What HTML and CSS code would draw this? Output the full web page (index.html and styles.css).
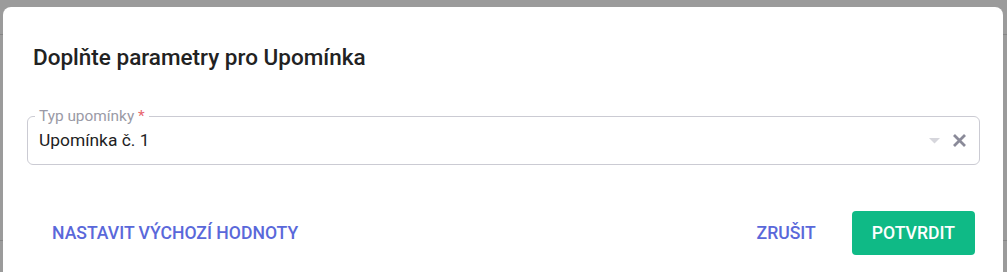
FILE: index.html
```html
<!DOCTYPE html>
<html lang="cs">
<head>
<meta charset="utf-8">
<title>Upomínka</title>
<link rel="stylesheet" href="styles.css">
</head>
<body>
<div class="backdrop">
  <div class="dialog">
    <h2 class="dialog-title">Doplňte parametry pro Upomínka</h2>
    <div class="dialog-content">
      <fieldset class="field">
        <legend class="field-label">Typ upomínky <span class="req">*</span></legend>
        <div class="field-row">
          <span class="field-value">Upomínka č. 1</span>
          <span class="field-icons">
            <svg class="caret" width="11" height="6" viewBox="0 0 11 6"><path d="M0 0h11L5.5 5.5z" fill="#d6d6dc"/></svg>
            <svg class="clear" width="15" height="15" viewBox="0 0 15 15"><path d="M2 2l11 11M13 2L2 13" stroke="#8a8a99" stroke-width="2.8" stroke-linecap="butt"/></svg>
          </span>
        </div>
      </fieldset>
    </div>
    <div class="dialog-actions">
      <button class="btn btn-text">NASTAVIT VÝCHOZÍ HODNOTY</button>
      <div class="actions-right">
        <button class="btn btn-text">ZRUŠIT</button>
        <button class="btn btn-primary">POTVRDIT</button>
      </div>
    </div>
  </div>
</div>
</body>
</html>
```
FILE: styles.css
```css
html, body {
  margin: 0;
  padding: 0;
  height: 100%;
  overflow: hidden;
}
body {
  font-family: Roboto, "Liberation Sans", sans-serif;
  background:
    linear-gradient(#868686, #868686) 0 34px / 100% 1px no-repeat,
    linear-gradient(#868686, #868686) 0 240px / 100% 1px no-repeat,
    #9b9b9b;
}
.backdrop {
  padding: 7px 0 0 3px;
  height: 100%;
  box-sizing: border-box;
}
.dialog {
  width: 1000px;
  height: 300px;
  background: #fff;
  border-radius: 8px 8px 0 0;
  box-sizing: border-box;
}
.dialog-title {
  margin: 0;
  padding: 35px 24px 0 30px;
  font-size: 22.5px;
  line-height: 30px;
  font-weight: 500;
  color: #222;
}
.dialog-content {
  padding: 45px 23px 0 24px;
}
.field {
  margin: 0;
  padding: 0 12px 0 11px;
  border: 1px solid #cbcbd3;
  border-radius: 6px;
  height: 57px;
  box-sizing: border-box;
  margin-top: -9px;
}
.field-label {
  padding: 0 4px;
  margin-left: -4px;
  font-size: 15.4px;
  line-height: 16px;
  color: #9a9aa6;
}
.req {
  color: #e8666e;
}
.field-row {
  display: flex;
  align-items: center;
  height: 38px;
  margin-top: -3px;
}
.field-value {
  flex: 1;
  font-size: 17.4px;
  color: #1e1e24;
}
.field-icons {
  display: flex;
  align-items: center;
  gap: 12px;
}
.caret {
  margin-top: 2px;
}
.dialog-actions {
  display: flex;
  justify-content: space-between;
  align-items: center;
  padding: 46px 28px 0 29px;
}
.actions-right {
  display: flex;
  gap: 16px;
}
.btn {
  font-family: Roboto, "Liberation Sans", sans-serif;
  font-size: 17.6px;
  font-weight: 500;
  height: 44px;
  padding: 0 20px;
  border: none;
  border-radius: 4px;
  background: transparent;
  cursor: pointer;
}
.btn-text {
  color: #5a68da;
}
.btn-primary {
  background: #0fba86;
  color: #fff;
}
```
